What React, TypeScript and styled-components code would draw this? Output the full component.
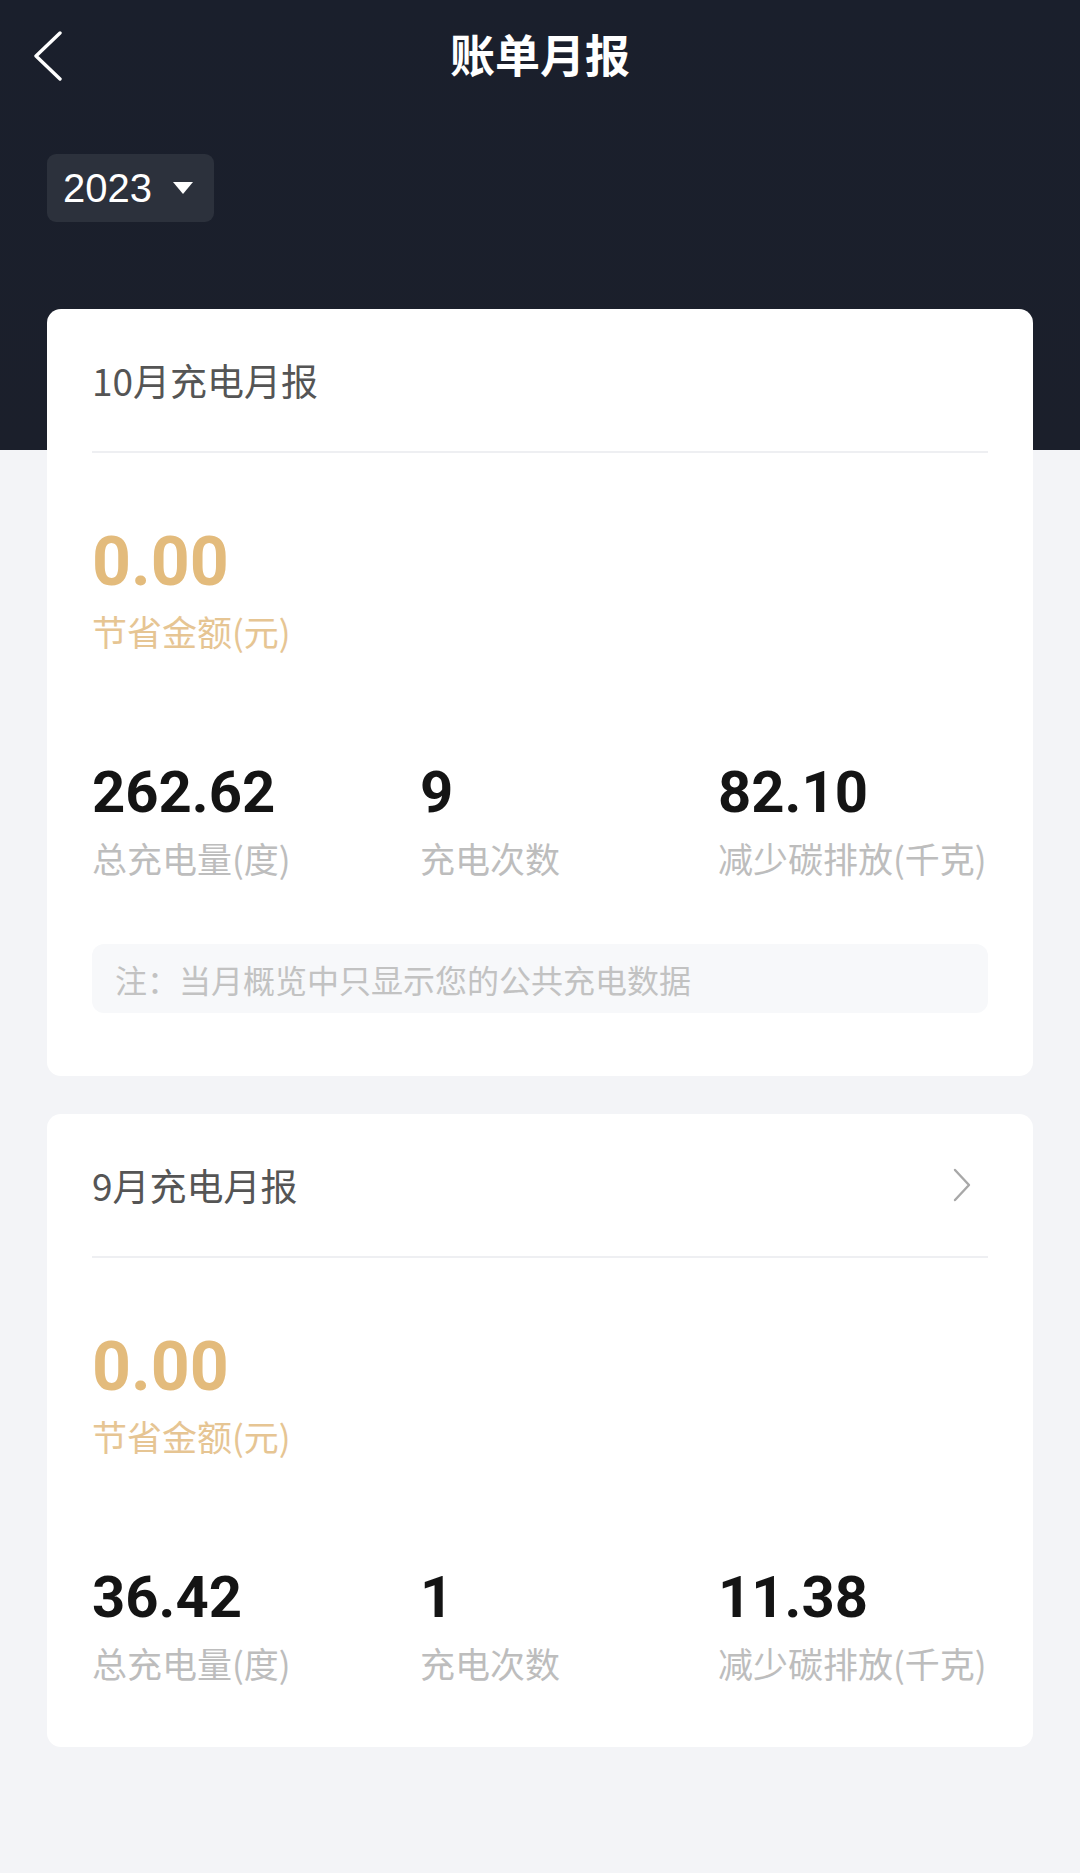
import React from 'react'
import styled, { createGlobalStyle } from 'styled-components'

const GlobalStyle = createGlobalStyle`
	* { box-sizing: border-box; }
	body {
		margin: 0;
		background: #f3f4f7;
		font-family: "Noto Sans CJK SC", "Noto Sans", sans-serif;
	}
`

const Page = styled.div`
	min-height: 1873px;
	background: linear-gradient(to bottom, #1a1f2c 0, #1b1f2b 450px, #f3f4f7 450px);
	padding-bottom: 40px;
`

const NavBar = styled.div`
	display: grid;
	grid-template-columns: 1fr auto 1fr;
	align-items: center;
	height: 106px;
	padding: 0 33px;
`

const BackButton = styled.div`
	display: flex;
	align-items: center;
	margin-top: 8px;
`

const NavTitle = styled.h1`
	margin: 0;
	font-size: 45px;
	font-weight: 700;
	color: #fff;
`

const YearRow = styled.div`
	padding: 48px 47px 0;
`

const YearPill = styled.div`
	display: inline-flex;
	align-items: center;
	gap: 20px;
	height: 68px;
	padding: 0 20px 0 16px;
	border-radius: 9px;
	background: #2c313c;
	color: #fff;
	font-family: "Liberation Sans", Arial, sans-serif;
	font-size: 40px;
`

const CardList = styled.div`
	display: flex;
	flex-direction: column;
	gap: 38px;
	padding: 87px 47px 0;
`

const Card = styled.div`
	background: #fff;
	border-radius: 14px;
	padding: 0 45px 63px;
`

const CardHead = styled.div`
	display: flex;
	align-items: center;
	justify-content: space-between;
	height: 144px;
	border-bottom: 2px solid #eeeff2;
`

const CardTitle = styled.div`
	font-size: 37px;
	color: #555;
`

const Saving = styled.div`
	margin-top: 75px;
	font-family: Roboto, "Liberation Sans", sans-serif;
	font-size: 68px;
	font-weight: 700;
	line-height: 1;
	color: #e3bb7c;
`

const Label = styled.div<{ $gold?: boolean }>`
	margin-top: ${p => (p.$gold ? 14 : 16)}px;
	font-size: 35px;
	line-height: 1.2;
	color: ${p => (p.$gold ? '#e6c593' : '#bdbdbd')};
	white-space: nowrap;
`

const Stats = styled.div`
	display: grid;
	grid-template-columns: 328px 298px 1fr;
	margin-top: 111px;
`

const StatValue = styled.div`
	font-family: Roboto, "Liberation Sans", sans-serif;
	font-size: 58px;
	font-weight: 700;
	line-height: 1;
	color: #141414;
`

const Note = styled.div`
	display: flex;
	align-items: center;
	height: 69px;
	margin-top: 65px;
	padding-left: 23px;
	border-radius: 12px;
	background: #f7f8fa;
	font-size: 32px;
	color: #c2c2c2;
`

type Report = {
	month: string
	saving: string
	energy: string
	count: string
	carbon: string
	current?: boolean
}

const reports: Report[] = [
	{ month: '10月充电月报', saving: '0.00', energy: '262.62', count: '9', carbon: '82.10', current: true },
	{ month: '9月充电月报', saving: '0.00', energy: '36.42', count: '1', carbon: '11.38' },
]

const BackIcon = () => (
	<svg width="30" height="52" viewBox="0 0 30 52">
		<polyline points="27,2 3,25 27,48" fill="none" stroke="#fff" strokeWidth="3.4" strokeLinecap="round" strokeLinejoin="round" />
	</svg>
)

const Caret = () => (
	<svg width="22" height="14" viewBox="0 0 22 14">
		<polygon points="1,1 21,1 11,13" fill="#fff" />
	</svg>
)

const Chevron = () => (
	<svg width="20" height="34" viewBox="0 0 20 34" style={{ marginRight: 16 }}>
		<polyline points="3,2 17,17 3,32" fill="none" stroke="#a8a8a8" strokeWidth="2.4" strokeLinecap="round" strokeLinejoin="round" />
	</svg>
)

const ReportCard = ({ r }: { r: Report }) => (
	<Card>
		<CardHead>
			<CardTitle>{r.month}</CardTitle>
			{!r.current && <Chevron />}
		</CardHead>
		<Saving>{r.saving}</Saving>
		<Label $gold>节省金额(元)</Label>
		<Stats>
			<div>
				<StatValue>{r.energy}</StatValue>
				<Label>总充电量(度)</Label>
			</div>
			<div>
				<StatValue>{r.count}</StatValue>
				<Label>充电次数</Label>
			</div>
			<div>
				<StatValue>{r.carbon}</StatValue>
				<Label>减少碳排放(千克)</Label>
			</div>
		</Stats>
		{r.current && <Note>注：当月概览中只显示您的公共充电数据</Note>}
	</Card>
)

export default function App() {
	return (
		<Page>
			<GlobalStyle />
			<NavBar>
				<BackButton><BackIcon /></BackButton>
				<NavTitle>账单月报</NavTitle>
				<div />
			</NavBar>
			<YearRow>
				<YearPill>
					2023
					<Caret />
				</YearPill>
			</YearRow>
			<CardList>
				{reports.map(r => <ReportCard key={r.month} r={r} />)}
			</CardList>
		</Page>
	)
}
